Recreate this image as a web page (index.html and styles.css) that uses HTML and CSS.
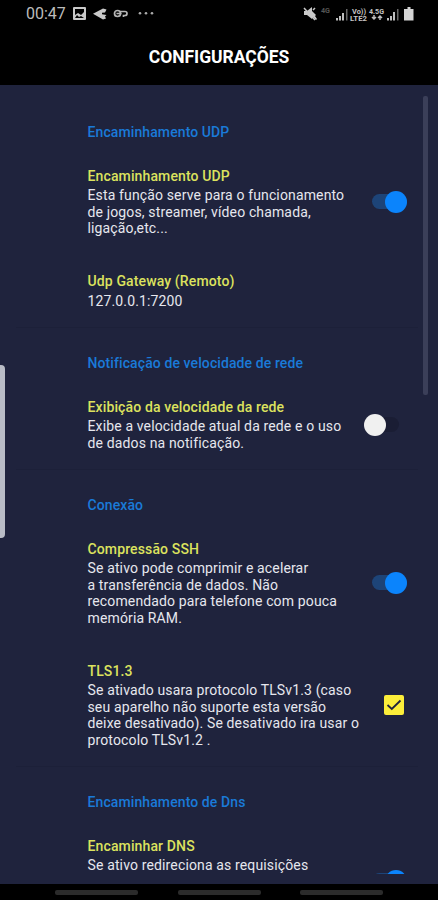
FILE: index.html
```html
<!DOCTYPE html>
<html lang="pt-BR">
<head>
<meta charset="utf-8">
<title>Configurações</title>
<link rel="stylesheet" href="styles.css">
</head>
<body>
<div class="status">
  <span class="clock">00:47</span>
  <svg class="icons-left" width="84" height="16" viewBox="0 0 84 16">
    <path fill="#c9c9c9" fill-rule="evenodd" d="M2 1h11a1 1 0 0 1 1 1v11a1 1 0 0 1-1 1H2a1 1 0 0 1-1-1V2a1 1 0 0 1 1-1zM3 3v6l3-2 3 2 3-3V3zM3 12h9l-3-2-2 1-2-2z"/>
    <path fill="#c9c9c9" d="M21 7.800 31 2.500l3.500 1-1.500 3-3 .3v1.500l4.500.7-1.500 1.500 1 2-3 1z"/>
    <g fill="none" stroke="#b5b5b5" stroke-width="1.700"><circle cx="45.500" cy="7.500" r="3"/><path d="M47.500 5.500H53a2 2 0 0 1 0 4h-1.500v1.500M44.500 7.500h5"/></g>
    <g fill="#aaa"><circle cx="68" cy="7.300" r="1.300"/><circle cx="74" cy="7.300" r="1.300"/><circle cx="80" cy="7.300" r="1.300"/></g>
  </svg>
  <svg class="icons-right" width="112" height="18" viewBox="0 0 112 18">
    <path fill="#c9c9c9" d="M2 6h3l5-4v4l4 4-1 1 2 3-1 1-3-3-1 2-5-4H2z"/>
    <path stroke="#c9c9c9" stroke-width="1.500" d="m2 3 11 12M11 5l2-2"/>
    <text class="net net-dim" x="19" y="8" textLength="9" lengthAdjust="spacingAndGlyphs">4G</text>
    <g fill="#bdbdbd"><path d="M34 13h2v2.500h-2zM37 11h2v4.500h-2zM40 8h2v7.500h-2zM85 13h2v2.500h-2zM88 11h2v4.500h-2zM91 7h2v8.500h-2z"/><path fill="#666" d="M44 4h1.500v11.500H44zM95 4h1.500v11.500H95z"/></g>
    <text class="net" x="50" y="9" textLength="14" lengthAdjust="spacingAndGlyphs">Vo))</text>
    <text class="net" x="48" y="15.500" textLength="17" lengthAdjust="spacingAndGlyphs">LTE2</text>
    <text class="net" x="67" y="8.500" textLength="15" lengthAdjust="spacingAndGlyphs">4.5G</text>
    <path stroke="#bdbdbd" stroke-width="1.500" fill="none" d="M72 10v4m-2-2 2 2 2-2M78 15v-4m-2 2 2-2 2 2"/>
    <path fill="#d4d4d4" d="M105.500 2h3v2h3v11.500h-9.500V4h3.500z"/>
  </svg>
</div>
<header class="appbar"><h1>CONFIGURAÇÕES</h1></header>
<main class="screen">
  <div class="list">
    <h2 class="section">Encaminhamento UDP</h2>
    <div class="item">
      <div class="text">
        <h3>Encaminhamento UDP</h3>
        <p>Esta função serve para o funcionamento<br>de jogos, streamer, vídeo chamada,<br>ligação,etc...</p>
      </div>
      <span class="switch on"></span>
    </div>
    <div class="item">
      <div class="text">
        <h3>Udp Gateway (Remoto)</h3>
        <p>127.0.0.1:7200</p>
      </div>
    </div>
    <h2 class="section divided">Notificação de velocidade de rede</h2>
    <div class="item">
      <div class="text">
        <h3>Exibição da velocidade da rede</h3>
        <p>Exibe a velocidade atual da rede e o uso<br>de dados na notificação.</p>
      </div>
      <span class="switch"></span>
    </div>
    <h2 class="section divided">Conexão</h2>
    <div class="item">
      <div class="text">
        <h3>Compressão SSH</h3>
        <p>Se ativo pode comprimir e acelerar<br>a transferência de dados. Não<br>recomendado para telefone com pouca<br>memória RAM.</p>
      </div>
      <span class="switch on"></span>
    </div>
    <div class="item">
      <div class="text">
        <h3>TLS1.3</h3>
        <p>Se ativado usara protocolo TLSv1.3 (caso<br>seu aparelho não suporte esta versão<br>deixe desativado). Se desativado ira usar o<br>protocolo TLSv1.2 .</p>
      </div>
      <svg class="check" width="20" height="20" viewBox="0 0 20 20"><rect width="20" height="20" rx="2" fill="#fcee3a"/><path d="m3.500 10 4.300 4 8.700-8.500" fill="none" stroke="#20233d" stroke-width="1.800"/></svg>
    </div>
    <h2 class="section divided">Encaminhamento de Dns</h2>
    <div class="item tall">
      <div class="text">
        <h3>Encaminhar DNS</h3>
        <p>Se ativo redireciona as requisições</p>
      </div>
      <span class="switch on"></span>
    </div>
  </div>
  <div class="scrollbar"></div>
  <div class="edge-handle"></div>
</main>
<nav class="navbar"><span></span><span></span><span></span></nav>
</body>
</html>
```
FILE: styles.css
```css
* { box-sizing: border-box; margin: 0; padding: 0; }
body {
  width: 438px;
  height: 900px;
  display: flex;
  flex-direction: column;
  overflow: hidden;
  background: #000;
  font-family: Roboto, "Liberation Sans", sans-serif;
}
.status {
  height: 28px;
  display: flex;
  align-items: center;
  padding: 0 24px 0 26px;
}
.clock { font-size: 16px; color: #bcbcbc; width: 40px; line-height: 28px; }
.icons-left { margin-left: 6px; }
.icons-right { margin-left: auto; }
.net { font: 700 7px Roboto, sans-serif; fill: #c4c4c4; }
.net-dim { fill: #555; }
.appbar {
  height: 57px;
  display: flex;
  justify-content: center;
  align-items: center;
}
.appbar h1 { font-size: 17.5px; font-weight: 700; color: #fff; letter-spacing: -0.05px; }
.screen {
  position: relative;
  height: 799px;
  padding: 11px 0 10px;
  background: #1f233d;
}
.list { height: 778px; overflow: hidden; }
.section {
  height: 52.9px;
  margin: 0 20px 0 16px;
  padding: 27px 0 0 71.5px;
  font-size: 14px;
  line-height: 19.5px;
  font-weight: 500;
  letter-spacing: 0.1px;
  color: #1a7ad8;
}
.divided { border-top: 1px solid #1c2039; padding-top: 26px; }
.item {
  display: flex;
  align-items: center;
  justify-content: space-between;
  padding: 18px 31px 17.5px 87.5px;
}
.tall { height: 122px; align-items: flex-start; }
.tall .switch { margin-top: 33px; }
.text { white-space: nowrap; }
h3 {
  font-size: 14px;
  line-height: 19.5px;
  margin-bottom: 1px;
  font-weight: 500;
  letter-spacing: 0.13px;
  color: #dce25e;
}
p {
  font-size: 14px;
  line-height: 16.5px;
  letter-spacing: 0.14px;
  color: #e6e7ee;
}
.switch {
  flex: none;
  width: 35px;
  height: 22px;
  margin-right: 8px;
  position: relative;
}
.switch::before {
  content: "";
  position: absolute;
  inset: 3.5px 0;
  border-radius: 8px;
  background: #1a1d34;
}
.switch::after {
  content: "";
  position: absolute;
  left: 0;
  top: 0;
  width: 22px;
  height: 22px;
  border-radius: 50%;
  background: #f0f0f0;
}
.switch.on { margin-right: 0; }
.switch.on::before { background: #1d4478; }
.switch.on::after { left: auto; right: 0; background: #0b84fc; }
.check { flex: none; margin-right: 3.5px; }
.scrollbar {
  position: absolute;
  left: 423px;
  top: 11px;
  width: 5px;
  height: 299px;
  border-radius: 2px;
  background: #3b3f59;
}
.edge-handle {
  position: absolute;
  left: 0;
  top: 280px;
  width: 5px;
  height: 173px;
  border-radius: 0 4px 4px 0;
  background: #b9bcc6;
}
.navbar {
  height: 16px;
  display: flex;
  justify-content: space-between;
  padding: 6px 55px 0;
}
.navbar span { width: 83px; height: 5px; border-radius: 2px; background: #2b2b2b; }
```
